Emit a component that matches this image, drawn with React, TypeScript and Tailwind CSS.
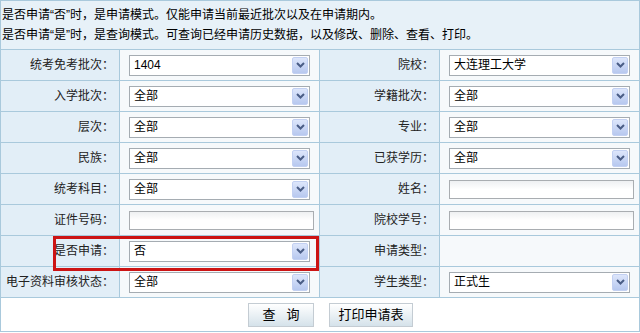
import type { ReactNode } from 'react'

const font = "font-['Liberation_Sans','Noto_Sans_CJK_SC',sans-serif]"

function Chevron() {
  return (
    <svg width="9" height="6" viewBox="0 0 9 6" className="block">
      <path d="M1 1 L4.5 4.5 L8 1" fill="none" stroke="#4a5d86" strokeWidth="2" />
    </svg>
  )
}

function Select({ value }: { value: string }) {
  return (
    <div className="flex items-center w-[181px] h-[21px] border border-[#a5acb2] bg-white">
      <span className="flex-1 pl-[4px] text-[12px] leading-none text-black">{value}</span>
      <div className="flex items-center justify-center w-[16px] h-[17px] mr-[1px] border border-[#c2d0f2] bg-gradient-to-b from-[#dde6fb] to-[#b7c8ef] rounded-[2px]">
        <Chevron />
      </div>
    </div>
  )
}

function TextBox() {
  return (
    <div className="w-[185px] h-[19px] border border-[#a9adb1] bg-gradient-to-b from-[#eef0f2] via-white to-white" />
  )
}

function Label({ children }: { children: ReactNode }) {
  return (
    <div className="flex items-center justify-end pr-[5px] bg-[#e2eef7] border-r border-[#a9c9dc] text-[12px] text-[#222]">
      {children}
    </div>
  )
}

function Value({ children, last }: { children?: ReactNode; last?: boolean }) {
  return (
    <div className={`flex items-center pl-[9px] bg-[#f6f9fb] ${last ? '' : 'border-r border-[#a9c9dc]'}`}>
      {children}
    </div>
  )
}

type Field = { label: string; select?: string; input?: boolean }

const rows: [Field, Field][] = [
  [{ label: '统考免考批次：', select: '1404' }, { label: '院校：', select: '大连理工大学' }],
  [{ label: '入学批次：', select: '全部' }, { label: '学籍批次：', select: '全部' }],
  [{ label: '层次：', select: '全部' }, { label: '专业：', select: '全部' }],
  [{ label: '民族：', select: '全部' }, { label: '已获学历：', select: '全部' }],
  [{ label: '统考科目：', select: '全部' }, { label: '姓名：', input: true }],
  [{ label: '证件号码：', input: true }, { label: '院校学号：', input: true }],
  [{ label: '是否申请：', select: '否' }, { label: '申请类型：' }],
  [{ label: '电子资料审核状态：', select: '全部' }, { label: '学生类型：', select: '正式生' }],
]

function FieldBody({ f }: { f: Field }) {
  if (f.select) return <Select value={f.select} />
  if (f.input) return <TextBox />
  return null
}

function Button({ children, w }: { children: ReactNode; w: string }) {
  return (
    <button
      className={`${w} h-[24px] border border-[#c4ccd3] bg-gradient-to-b from-white to-[#d5e2ea] text-[13px] text-black leading-none`}
    >
      {children}
    </button>
  )
}

export default function App() {
  return (
    <div className={`relative w-[640px] h-[333px] bg-white ${font}`}>
      <div className="w-[640px] h-[332px] border border-[#a9c9dc] flex flex-col">
        <div className="h-[49px] bg-[#e7f1f8] border-b border-[#a9c9dc] flex flex-col justify-center gap-[6px] pl-[1px] text-[12px] leading-[14px] text-black">
          <div>是否申请“否”时，是申请模式。仅能申请当前最近批次以及在申请期内。</div>
          <div>是否申请“是”时，是查询模式。可查询已经申请历史数据，以及修改、删除、查看、打印。</div>
        </div>
        {rows.map(([a, b], i) => (
          <div
            key={i}
            className="grid grid-cols-[119px_200px_120px_199px] h-[31px] border-b border-[#a9c9dc]"
          >
            <Label>{a.label}</Label>
            <Value>
              <FieldBody f={a} />
            </Value>
            <Label>{b.label}</Label>
            <Value last>
              <FieldBody f={b} />
            </Value>
          </div>
        ))}
        <div className="flex-1 flex items-center justify-center gap-[15px] pl-[21px] bg-white">
          <Button w="w-[66px]">查&nbsp;&nbsp;&nbsp;询</Button>
          <Button w="w-[84px]">打印申请表</Button>
        </div>
      </div>
      <div className="absolute left-[53px] top-[236px] w-[266px] h-[35px] border-[3px] border-[#cc1414]" />
    </div>
  )
}
